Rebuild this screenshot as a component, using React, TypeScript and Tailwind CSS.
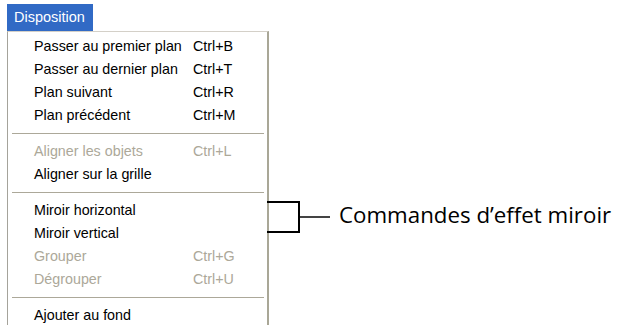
import React from 'react';

type Item = { label: string; shortcut?: string; disabled?: boolean } | 'sep';

const items: Item[] = [
  { label: 'Passer au premier plan', shortcut: 'Ctrl+B' },
  { label: 'Passer au dernier plan', shortcut: 'Ctrl+T' },
  { label: 'Plan suivant', shortcut: 'Ctrl+R' },
  { label: 'Plan précédent', shortcut: 'Ctrl+M' },
  'sep',
  { label: 'Aligner les objets', shortcut: 'Ctrl+L', disabled: true },
  { label: 'Aligner sur la grille' },
  'sep',
  { label: 'Miroir horizontal' },
  { label: 'Miroir vertical' },
  { label: 'Grouper', shortcut: 'Ctrl+G', disabled: true },
  { label: 'Dégrouper', shortcut: 'Ctrl+U', disabled: true },
  'sep',
  { label: 'Ajouter au fond' },
];

const App = () => {
  return (
    <div className="h-[325px] w-[621px] overflow-hidden bg-white font-['Liberation_Sans',Arial,sans-serif]">
      <div className="flex items-start">
        {/* menu - start */}
        <div className="ml-[7px] flex shrink-0 flex-col">
          <div className="mt-[4px] flex h-[27px] w-[86px] items-center bg-[#316ac5] pl-[7px] text-[14.5px] text-white">
            Disposition
          </div>
          <div className="h-[300px] w-[262px] border-t border-l border-r-2 border-t-[#d4d0c8] border-l-[#a5a39b] border-r-[#a9a797] bg-white pt-[3px]">
            {items.map((item, i) =>
              item === 'sep' ? (
                <div key={i} className="flex h-[13px] items-center pl-[4px] pr-[3px]">
                  <div className="h-[2px] w-full border-t border-t-[#aca899] border-b border-b-white" />
                </div>
              ) : (
                <div
                  key={i}
                  className={`flex h-[23px] items-center whitespace-nowrap text-[14.3px] ${item.disabled ? 'text-[#aca899]' : 'text-black'}`}
                >
                  <span className="w-[185px] shrink-0 pl-[26px]">{item.label}</span>
                  <span>{item.shortcut}</span>
                </div>
              )
            )}
          </div>
        </div>
        {/* menu - end */}
        {/* annotation - start */}
        <div className="-ml-[2px] mt-[201px] flex items-center">
          <div className="h-[32px] w-[33px] border-y-2 border-r-2 border-black" />
          <div className="h-[2px] w-[30px] bg-[#444]" />
          <span className="-mt-[3px] ml-[9px] whitespace-nowrap text-[22.3px] leading-none text-black font-['Open_Sans',sans-serif]">
            Commandes d’effet miroir
          </span>
        </div>
        {/* annotation - end */}
      </div>
    </div>
  );
};

export default App;
